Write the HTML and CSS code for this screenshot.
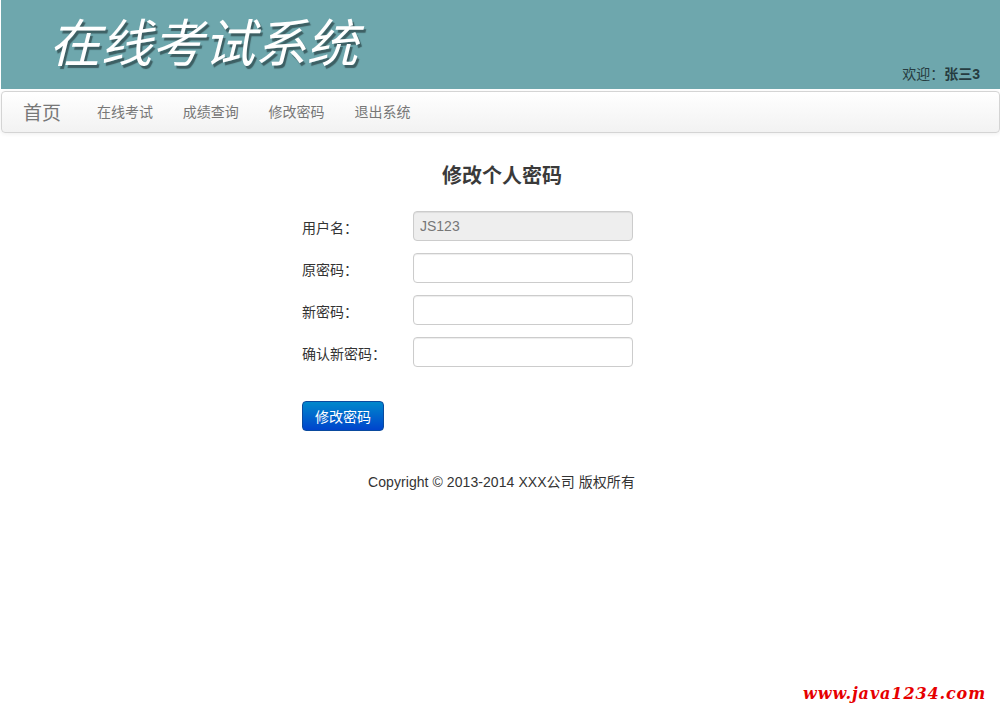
FILE: index.html
```html
<!DOCTYPE html>
<html lang="zh-CN">
<head>
<meta charset="utf-8">
<title>修改个人密码</title>
<link rel="stylesheet" href="styles.css">
</head>
<body>
<header class="banner">
  <h1 class="logo">在线考试系统</h1>
  <div class="welcome">欢迎：<strong>张三3</strong></div>
</header>
<nav class="navbar">
  <a class="brand" href="#">首页</a>
  <a class="nav-link" href="#">在线考试</a>
  <a class="nav-link" href="#">成绩查询</a>
  <a class="nav-link" href="#">修改密码</a>
  <a class="nav-link" href="#">退出系统</a>
</nav>
<main class="content">
  <h2 class="title">修改个人密码</h2>
  <form class="form">
    <div class="row"><label class="label">用户名：</label><input class="input" type="text" value="JS123" disabled></div>
    <div class="row"><label class="label">原密码：</label><input class="input" type="password"></div>
    <div class="row"><label class="label">新密码：</label><input class="input" type="password"></div>
    <div class="row"><label class="label">确认新密码：</label><input class="input" type="password"></div>
    <button class="btn" type="button">修改密码</button>
  </form>
  <footer class="copyright">Copyright © 2013-2014 XXX公司 版权所有</footer>
</main>
<div class="watermark">www.java1234.com</div>
</body>
</html>
```
FILE: styles.css
```css
* { box-sizing: border-box; }
html, body { margin: 0; height: 718px; overflow: hidden; }
body {
  position: relative;
  background: #fff;
  color: #333;
  font-family: "Liberation Sans", "Noto Sans CJK SC", sans-serif;
  font-size: 14px;
}
.banner {
  height: 89px;
  margin-left: 1px;
  padding: 0 20px 0 48px;
  background: #6ea7ad;
  display: flex;
  justify-content: space-between;
  align-items: flex-end;
}
.logo {
  align-self: flex-start;
  margin: 8px 0 0;
  font-size: 51.5px;
  line-height: 72px;
  font-weight: 400;
  font-style: italic;
  color: #fff;
  text-shadow: 2px 3px 1px #3d5f63;
  white-space: nowrap;
}
.welcome { color: #263c40; line-height: 20px; margin-bottom: 5px; }
.welcome strong { font-weight: 700; }
.navbar {
  height: 42px;
  margin: 2px 0 0 1px;
  padding: 0 0 2px 21px;
  display: flex;
  align-items: center;
  background: linear-gradient(#ffffff, #f2f2f2);
  border: 1px solid #d4d4d4;
  border-radius: 4px;
  box-shadow: 0 1px 4px rgba(0,0,0,.065);
}
.navbar a { text-decoration: none; color: #777; white-space: nowrap; }
.brand { font-size: 19px; width: 74px; }
.nav-link { margin-right: 29.8px; }
.content { width: 400px; margin: 0 0 0 302px; }
.title {
  margin: 29px 0 0;
  text-align: center;
  font-size: 20px;
  line-height: 28px;
  font-weight: 700;
  color: #3a3a3a;
}
.form { margin-top: 21px; display: flex; flex-direction: column; }
.row { display: flex; align-items: center; height: 30px; margin-bottom: 12px; }
.label { width: 111px; color: #333; padding-top: 2px; }
.input {
  width: 220px;
  height: 30px;
  padding: 4px 6px;
  border: 1px solid #ccc;
  border-radius: 4px;
  background: #fff;
  box-shadow: inset 0 1px 1px rgba(0,0,0,.075);
  font: 14px "Liberation Sans", sans-serif;
  color: #555;
}
.input:disabled { background: #eee; color: #777; opacity: 1; }
.btn {
  align-self: flex-start;
  width: 82px;
  height: 30px;
  margin-top: 22px;
  padding: 0;
  border: 1px solid #0a4a9e;
  border-radius: 4px;
  background: linear-gradient(#0088cc, #0044cc);
  color: #fff;
  font: 14px "Liberation Sans", "Noto Sans CJK SC", sans-serif;
}
.copyright { margin: 41px 0 0 66px; line-height: 20px; color: #333; white-space: nowrap; letter-spacing: .07px; }
.watermark {
  position: absolute;
  right: 14px;
  top: 683px;
  font: italic 700 16px/22px "DejaVu Serif", serif;
  letter-spacing: .9px;
  color: #e60000;
}
```
